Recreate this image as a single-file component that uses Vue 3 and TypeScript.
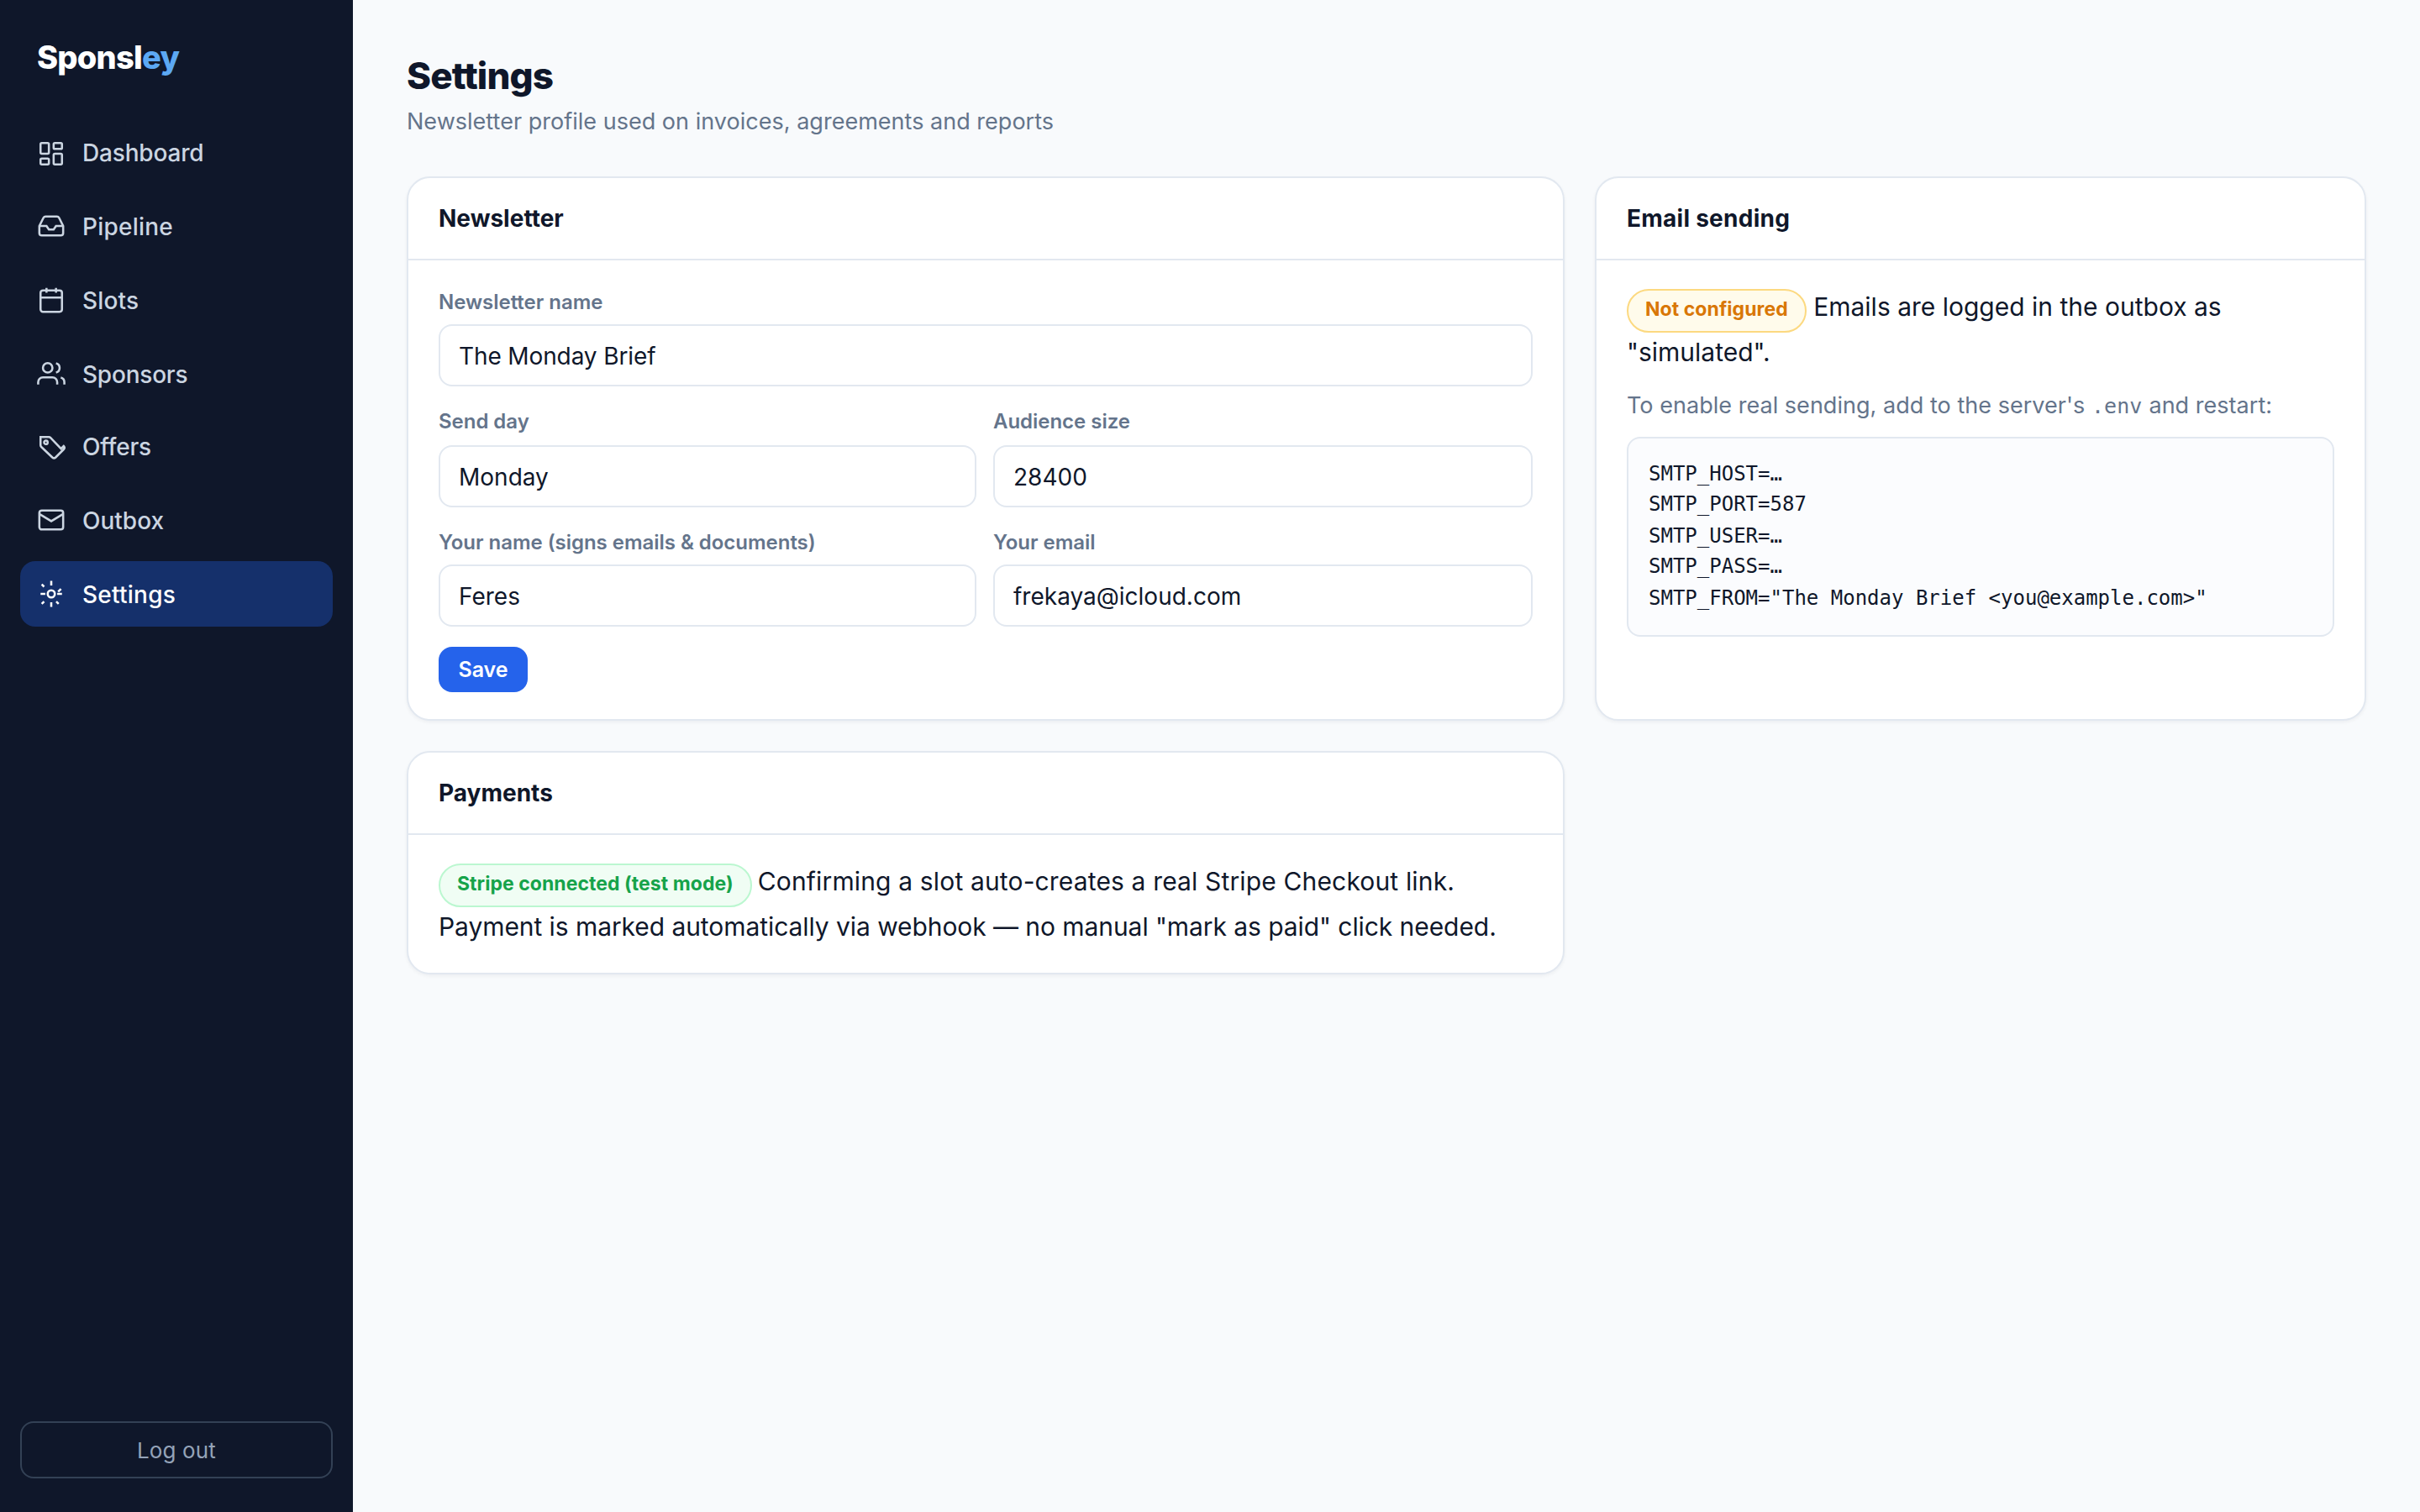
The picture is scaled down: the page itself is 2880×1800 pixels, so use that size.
<script setup lang="ts">
import { ref } from 'vue'

interface NavItem {
  label: string
  shift: number
  // letter tracking of the label, in pixels
  track: number
  rects?: { x: number; y: number; w: number; h: number; r: number }[]
  circles?: { x: number; y: number; r: number }[]
  paths?: string[]
}

const nav: NavItem[] = [
  {
    label: 'Dashboard',
    shift: 1,
    track: -0.17,
    rects: [
      { x: 3, y: 3, w: 7, h: 9, r: 1 },
      { x: 14, y: 3, w: 7, h: 5, r: 1 },
      { x: 14, y: 12, w: 7, h: 9, r: 1 },
      { x: 3, y: 16, w: 7, h: 5, r: 1 },
    ],
  },
  {
    label: 'Pipeline',
    shift: -1,
    track: 0.22,
    paths: [
      'M22 12h-6l-2 3h-4l-2-3H2',
      'M5.45 5.11 2 12v6a2 2 0 0 0 2 2h16a2 2 0 0 0 2-2v-6l-3.45-6.89A2 2 0 0 0 16.76 4H7.24a2 2 0 0 0-1.79 1.11z',
    ],
  },
  {
    label: 'Slots',
    shift: -1,
    track: 0.15,
    rects: [{ x: 3, y: 4, w: 18, h: 18, r: 2 }],
    paths: ['M3 10h18M8 2v4M16 2v4'],
  },
  {
    label: 'Sponsors',
    shift: -1,
    track: -0.22,
    circles: [{ x: 9, y: 7, r: 4 }],
    paths: [
      'M17 21v-2a4 4 0 0 0-4-4H5a4 4 0 0 0-4 4v2',
      'M23 21v-2a4 4 0 0 0-3-3.87M16 3.13a4 4 0 0 1 0 7.75',
    ],
  },
  {
    label: 'Offers',
    shift: 1,
    track: -0.22,
    circles: [{ x: 7.5, y: 7.5, r: 1.5 }],
    paths: [
      'M3 3h7a2 2 0 0 1 1.4.6l8.8 9.2 2.2-2.2a2 2 0 0 1 0 2.8l-6.7 6.7a2 2 0 0 1-2.8 0L3.6 11.3A2 2 0 0 1 3 9.9z',
    ],
  },
  {
    label: 'Outbox',
    shift: -1,
    track: 0,
    rects: [{ x: 2, y: 4, w: 20, h: 16, r: 2 }],
    paths: ['m2 7 10 6 10-6'],
  },
  {
    label: 'Settings',
    shift: -1,
    track: 0.25,
    circles: [{ x: 12, y: 12, r: 3 }],
    paths: [
      'M12 1v4M12 19v4M3 12h4M17 12h4M4 4l2 2M16.2 18.4l2 2M4 20.4l2-2M17.8 10.2l2.4-2.4',
    ],
  },
]

const active = ref('Settings')

const form = ref({
  name: 'The Monday Brief',
  day: 'Monday',
  audience: '28400',
  owner: 'Feres',
  email: 'frekaya@icloud.com',
})

const envLines = [
  'SMTP_HOST=…',
  'SMTP_PORT=587',
  'SMTP_USER=…',
  'SMTP_PASS=…',
  'SMTP_FROM="The Monday Brief <you@example.com>"',
]
</script>

<template>
  <div class="app">
    <aside class="sidebar">
      <div class="logo">Sponsl<span class="logo-accent">ey</span></div>
      <nav class="nav">
        <a
          v-for="item in nav"
          :key="item.label"
          class="nav-item"
          :class="{ active: item.label === active }"
          @click="active = item.label"
        >
          <svg class="icon" viewBox="0 0 24 24" :style="{ transform: `translateY(${item.shift}px)` }">
            <rect
              v-for="(s, i) in item.rects"
              :key="'r' + i"
              :x="s.x"
              :y="s.y"
              :width="s.w"
              :height="s.h"
              :rx="s.r"
            />
            <circle v-for="(s, i) in item.circles" :key="'c' + i" :cx="s.x" :cy="s.y" :r="s.r" />
            <path v-for="(d, i) in item.paths" :key="'p' + i" :d="d" />
          </svg>
          <span :style="{ letterSpacing: item.track + 'px' }">{{ item.label }}</span>
        </a>
      </nav>
      <button class="logout">Log out</button>
    </aside>

    <main class="main">
      <h1 class="title">Settings</h1>
      <p class="subtitle">Newsletter profile used on invoices, agreements and reports</p>

      <div class="grid">
        <section class="card">
          <header class="card-head">Newsletter</header>
          <form class="card-body form" @submit.prevent>
            <label class="field wide">
              <span class="label">Newsletter name</span>
              <input v-model="form.name" class="input name" />
            </label>
            <label class="field mid">
              <span class="label">Send day</span>
              <input v-model="form.day" class="input" />
            </label>
            <label class="field mid">
              <span class="label">Audience size</span>
              <input v-model="form.audience" class="input" />
            </label>
            <label class="field">
              <span class="label">Your name (signs emails &amp; documents)</span>
              <input v-model="form.owner" class="input" />
            </label>
            <label class="field">
              <span class="label">Your email</span>
              <input v-model="form.email" class="input" spellcheck="false" />
            </label>
            <button class="save">Save</button>
          </form>
        </section>

        <section class="card">
          <header class="card-head email-head">Email sending</header>
          <div class="card-body">
            <p class="copy">
              <span class="badge amber">Not configured</span> Emails are logged in the outbox as "simulated".
            </p>
            <p class="hint">To enable real sending, add to the server's <code>.env</code> and restart:</p>
            <div class="env">
              <div v-for="line in envLines" :key="line" class="env-line">{{ line }}</div>
            </div>
          </div>
        </section>

        <section class="card">
          <header class="card-head">Payments</header>
          <div class="card-body">
            <p class="copy">
              <span class="badge green">Stripe connected (test mode)</span>
              <span class="loose"> Confirming a slot auto-creates a real Stripe Checkout link.</span>
              <span class="tight"> Payment is marked automatically via webhook — no manual "mark as paid" click needed.</span>
            </p>
          </div>
        </section>
      </div>
    </main>
  </div>
</template>

<style>
body {
  margin: 0;
  background: #f8fafc;
}
</style>

<style scoped>
.app {
  display: flex;
  min-height: 1800px;
  background: #f8fafc;
  color: #0f172a;
  font-family: Inter, 'Liberation Sans', sans-serif;
  font-size: 30px;
}
.app * {
  box-sizing: border-box;
}
p,
h1 {
  margin: 0;
}

.sidebar {
  display: flex;
  flex-direction: column;
  flex: none;
  width: 420px;
  padding: 39px 24px 40px;
  background: #0f172a;
}
.logo {
  height: 58px;
  margin-bottom: 45px;
  padding-left: 20px;
  color: #fff;
  font-size: 38px;
  font-weight: 800;
  line-height: 58px;
  letter-spacing: -0.02em;
}
.logo-accent {
  color: #5ca8f3;
}
.nav {
  display: flex;
  flex-direction: column;
  gap: 10px;
}
.nav-item {
  display: flex;
  align-items: center;
  gap: 20px;
  height: 78px;
  padding: 18px 20px 16px;
  border-radius: 18px;
  color: #cbd5e1;
  font-size: 28px;
  font-weight: 500;
  line-height: 44px;
}
.nav-item:nth-child(5) {
  margin-top: -2px;
}
.nav-item.active {
  background: #15306b;
  color: #fff;
}
.icon {
  flex: none;
  width: 34px;
  height: 34px;
  fill: none;
  stroke: currentColor;
  stroke-width: 1.8;
}
.logout {
  height: 68px;
  margin: auto 0 0;
  padding: 2px 0 0;
  border: 2px solid #334155;
  border-radius: 16px;
  background: transparent;
  color: #94a3b8;
  font: 400 26px/62px Inter, 'Liberation Sans', sans-serif;
  letter-spacing: 0.15px;
}

.main {
  flex: 1;
  min-width: 0;
  padding: 62px 64px;
}
.title {
  font-size: 44px;
  font-weight: 800;
  line-height: 56px;
  letter-spacing: -0.02em;
}
.subtitle {
  margin: 6px 0 44px;
  color: #64748b;
  font-size: 27px;
  line-height: 42px;
  letter-spacing: 0.02px;
}

.grid {
  display: grid;
  grid-template-columns: 1378px 1fr;
  gap: 36px;
}
.card {
  min-width: 0;
  border: 2px solid #e2e8f0;
  border-radius: 28px;
  background: #fff;
  box-shadow: 0 2px 4px rgba(15, 23, 42, 0.05);
}
.card-head {
  height: 98px;
  padding: 0 36px;
  border-bottom: 2px solid #e2e8f0;
  font-size: 28px;
  font-weight: 700;
  line-height: 96px;
}
.email-head {
  letter-spacing: 0.26px;
}
.card-body {
  padding: 28px 36px;
}

.form {
  display: grid;
  grid-template-columns: 640px 1fr;
  gap: 20px;
  padding-bottom: 32px;
}
.field {
  display: flex;
  flex-direction: column;
  min-width: 0;
}
.wide {
  grid-column: 1 / -1;
}
.label {
  margin-bottom: 5px;
  padding-top: 1px;
  color: #64748b;
  font-size: 24px;
  font-weight: 600;
  line-height: 42px;
  letter-spacing: -0.03px;
}
.mid .label {
  margin-bottom: 7px;
}
.input {
  width: 100%;
  height: 74px;
  padding: 2px 22px 0;
  border: 2px solid #e2e8f0;
  border-radius: 16px;
  outline: none;
  background: #fff;
  color: #0f172a;
  font: 400 28px/68px Inter, 'Liberation Sans', sans-serif;
}
.name {
  letter-spacing: -0.12px;
}
.save {
  justify-self: start;
  width: 106px;
  height: 54px;
  margin-top: 4px;
  padding: 0;
  border: 0;
  border-radius: 16px;
  background: #2563eb;
  color: #fff;
  font: 600 25px/54px Inter, 'Liberation Sans', sans-serif;
}

.copy {
  line-height: 54px;
}
.loose {
  letter-spacing: 0.15px;
}
.tight {
  letter-spacing: -0.07px;
}
.badge {
  display: inline-block;
  height: 52px;
  margin-bottom: -10px;
  padding: 4px 20px 0;
  border: 2px solid;
  border-radius: 26px;
  font-size: 23px;
  font-weight: 700;
  line-height: 36px;
  vertical-align: baseline;
}
.amber {
  border-color: #fcd980;
  background: #fffbeb;
  color: #d97706;
  letter-spacing: 0.06px;
}
.green {
  margin-right: -1.5px;
  border-color: #bbf7d0;
  background: #f0fdf4;
  color: #16a34a;
  letter-spacing: 0.05px;
}
.hint {
  margin: 16px 0;
  color: #64748b;
  font-size: 27px;
  line-height: 42px;
  letter-spacing: 0.03px;
}
.hint code {
  margin-right: 0.5px;
  font-family: 'DejaVu Sans Mono', monospace;
  font-size: 25px;
  line-height: 1;
}
.env {
  padding: 24px 24px 26px;
  border: 2px solid #e2e8f0;
  border-radius: 16px;
  background: #fbfcfe;
  font: 24px/36px 'DejaVu Sans Mono', monospace;
  white-space: pre;
}
.env-line:nth-child(odd):not(:first-child) {
  margin-top: 2px;
}
</style>
